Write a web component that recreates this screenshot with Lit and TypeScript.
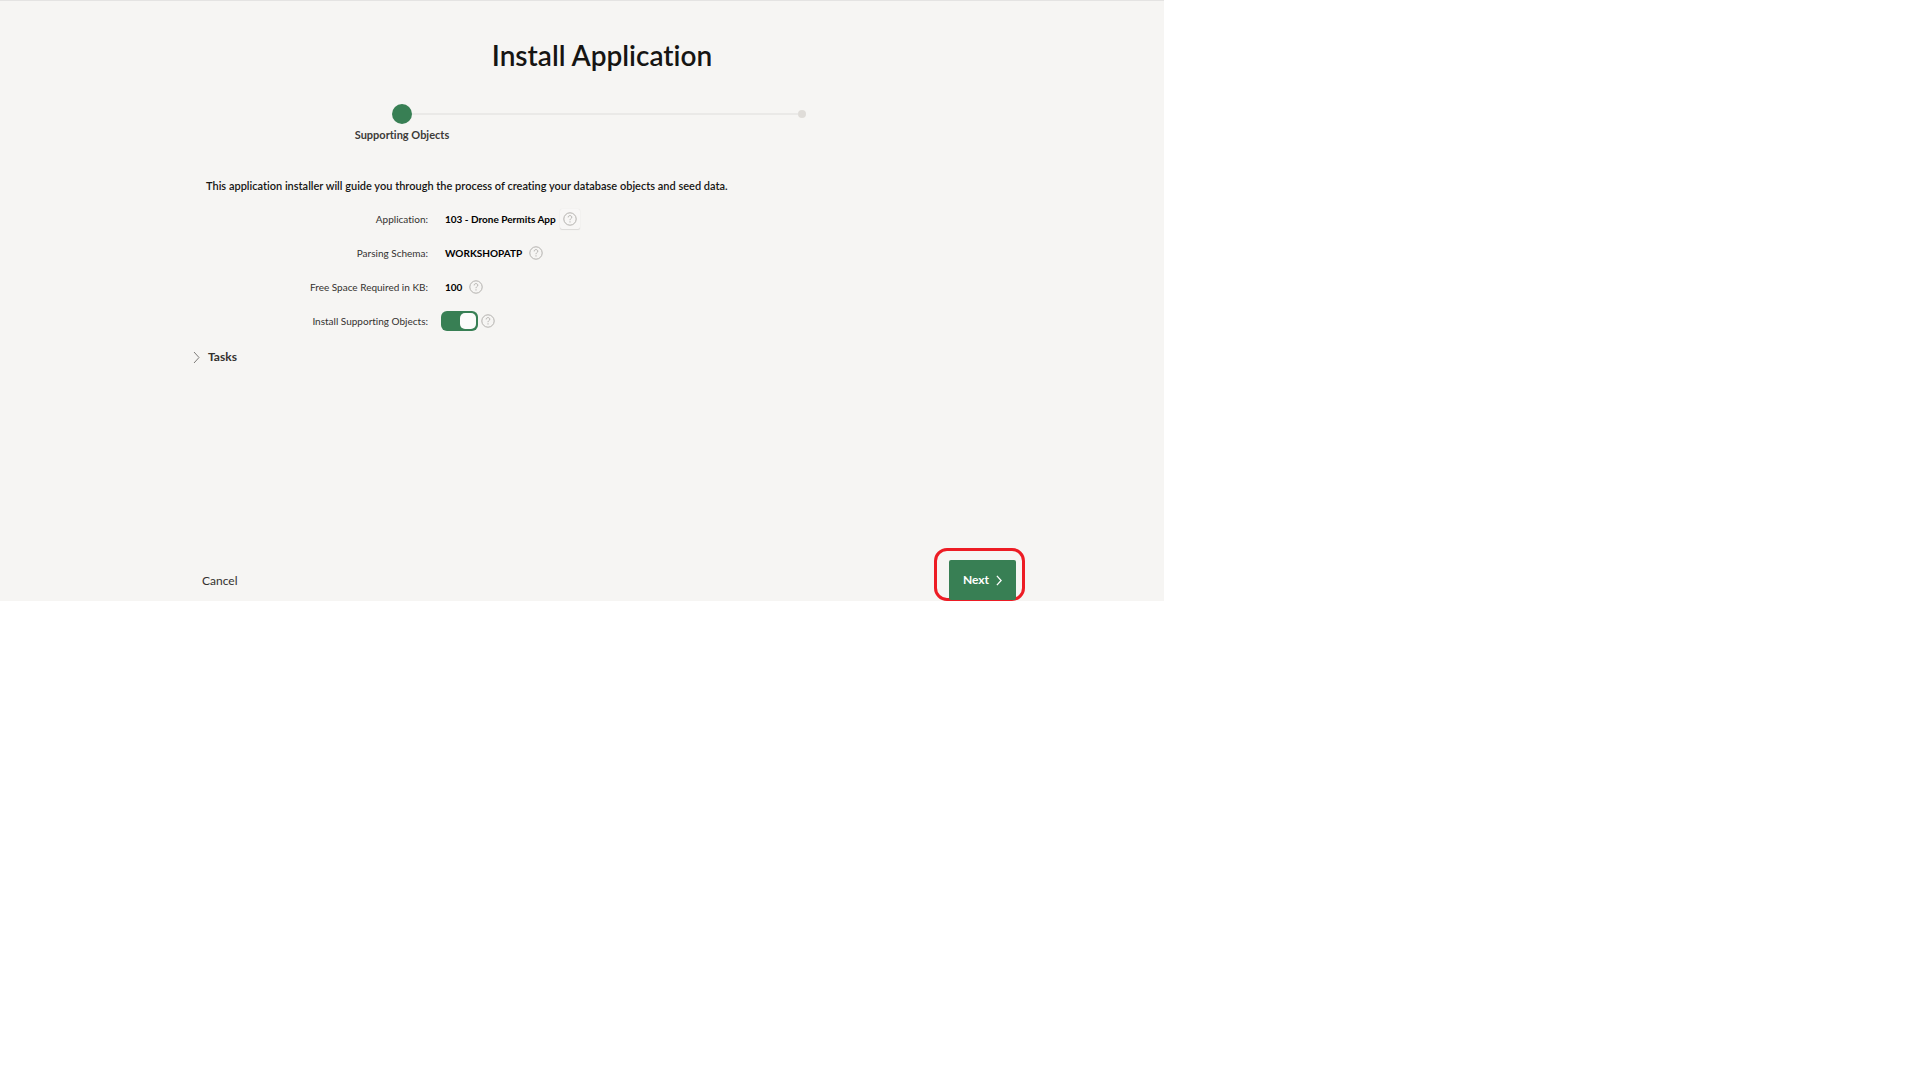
import { LitElement, html, css, svg, nothing } from "lit";
import { customElement, property, state } from "lit/decorators.js";
import { classMap } from "lit/directives/class-map.js";

interface Step {
  label: string;
}

interface Field {
  id: string;
  label: string;
  value: string;
  raised?: boolean;
}

const STEPS: Step[] = [{ label: "Supporting Objects" }, { label: "" }];

const FIELDS: Field[] = [
  { id: "application", label: "Application:", value: "103 - Drone Permits App", raised: true },
  { id: "schema", label: "Parsing Schema:", value: "WORKSHOPATP" },
  { id: "space", label: "Free Space Required in KB:", value: "100" },
];

const chevron = svg`<path d="M1 1l5 5.5L1 12" fill="none" stroke="currentColor" />`;

@customElement("help-button")
class HelpButton extends LitElement {
  @property() topic = "";
  @property({ type: Boolean }) raised = false;

  static styles = css`
    :host {
      display: block;
    }
    .help {
      display: flex;
      align-items: center;
      justify-content: center;
      width: 20px;
      height: 20px;
      padding: 0;
      border: 0;
      border-radius: 2px;
      background: transparent;
      color: #b3b1ae;
      cursor: pointer;
    }
    .raised {
      box-shadow: 0 1px 1px rgba(0, 0, 0, 0.1), 0 0 1px rgba(0, 0, 0, 0.1);
      background: #f8f7f6;
    }
    svg {
      display: block;
    }
  `;

  render() {
    return html`<button
      type="button"
      class=${classMap({ help: true, raised: this.raised })}
      aria-label="Help: ${this.topic}"
    >
      <svg width="14" height="14" viewBox="0 0 14 14" fill="none" stroke="currentColor" aria-hidden="true">
        <circle cx="7" cy="7" r="6.2" />
        <path d="M5.2 5.4c0-1.2.8-1.8 1.8-1.8s1.8.7 1.8 1.6c0 1.3-1.8 1.4-1.8 3" />
        <path d="M7 9.3v1.2" />
      </svg>
    </button>`;
  }
}

@customElement("app-root")
class AppRoot extends LitElement {
  @state() private tasksOpen = false;

  static styles = css`
    :host {
      display: block;
      min-height: 100vh;
      background: #fff;
      color: #161513;
      font-family: Lato, "Open Sans", sans-serif;
      font-size: 11px;
      line-height: 16px;
      font-variant-ligatures: none;
    }
    .panel {
      box-sizing: border-box;
      max-width: 1164px;
      display: flex;
      flex-direction: column;
      border-top: 1px solid #e4e3e2;
      padding: 0 139px 0 190px;
      background: #f6f5f3;
    }
    .wizard {
      padding: 0 23px 0 12px;
    }
    .title {
      margin: 0;
      padding-top: 36px;
      font-size: 28px;
      line-height: 36px;
      font-weight: 600;
      text-align: center;
    }
    .steps {
      display: flex;
      margin: 31px 0 0;
      padding: 0;
      list-style: none;
    }
    .step {
      flex: 1;
      display: grid;
      grid-template-columns: 1fr auto 1fr;
      grid-template-rows: 20px 22px;
      align-items: center;
      justify-items: center;
    }
    .rail {
      justify-self: stretch;
      height: 2px;
      background: #eae9e7;
    }
    .rail.off {
      background: transparent;
    }
    .dot {
      width: 8px;
      height: 8px;
      border-radius: 50%;
      background: #dfdcd8;
    }
    .current .dot {
      width: 20px;
      height: 20px;
      background: #387f54;
    }
    .step-label {
      grid-column: 1 / -1;
      font-weight: 700;
      color: #3d3b38;
    }
    .intro {
      margin: 32px 0 0;
      padding: 0 4px;
      font-weight: 600;
    }
    .form {
      margin-top: 8px;
    }
    .row {
      display: flex;
      align-items: center;
      height: 34px;
    }
    .label {
      flex: 0 0 226px;
      text-align: right;
      font-size: 10px;
      color: #33312f;
    }
    .control {
      display: flex;
      align-items: center;
      padding-left: 13px;
    }
    .value {
      padding: 0 4px;
      font-size: 10px;
      font-weight: 700;
      color: #000;
    }
    .toggle {
      appearance: none;
      box-sizing: border-box;
      display: flex;
      width: 37px;
      height: 20px;
      margin: 0;
      padding: 2px;
      border-radius: 6px;
      background: #8b8580;
      cursor: pointer;
    }
    .toggle::before {
      content: "";
      width: 16px;
      border-radius: 5px;
      background: #fcfbfa;
    }
    .toggle:checked {
      justify-content: flex-end;
      background: #387f54;
    }
    .tasks {
      display: flex;
      align-items: center;
      gap: 8px;
      margin-top: 11px;
      padding: 0 3px;
      border: 0;
      background: transparent;
      color: #33312f;
      font: inherit;
      font-size: 12px;
      font-weight: 700;
      cursor: pointer;
    }
    .tasks svg {
      color: #7c7a77;
    }
    .tasks.open svg {
      transform: rotate(90deg);
    }
    .footer {
      display: flex;
      align-items: flex-end;
      justify-content: space-between;
      margin-top: 183px;
    }
    .cancel {
      height: 40px;
      padding: 0 12px;
      border: 0;
      background: transparent;
      color: #33312f;
      font: inherit;
      font-size: 12px;
      cursor: pointer;
    }
    .highlight {
      box-sizing: border-box;
      display: flex;
      border: 3px solid #ed1c24;
      border-radius: 13px;
      padding: 9px 6px 0 12px;
      height: 53px;
    }
    .next {
      display: flex;
      align-items: center;
      gap: 7px;
      height: 40px;
      padding: 0 14px;
      border: 0;
      border-radius: 2px;
      background: #387f54;
      color: #fff;
      font: inherit;
      font-size: 12px;
      font-weight: 700;
      cursor: pointer;
    }
  `;

  private toggleTasks() {
    this.tasksOpen = !this.tasksOpen;
  }

  private renderStep(step: Step, index: number) {
    return html`<li class=${classMap({ step: true, current: index === 0 })}>
      <span class=${classMap({ rail: true, off: index === 0 })}></span>
      <span class="dot"></span>
      <span class=${classMap({ rail: true, off: index === STEPS.length - 1 })}></span>
      ${step.label ? html`<span class="step-label">${step.label}</span>` : nothing}
    </li>`;
  }

  private renderField(field: Field) {
    return html`<div class="row">
      <label class="label" for=${field.id}>${field.label}</label>
      <div class="control">
        <output class="value" id=${field.id}>${field.value}</output>
        <help-button topic=${field.label} ?raised=${field.raised ?? false}></help-button>
      </div>
    </div>`;
  }

  render() {
    return html`<main class="panel">
      <div class="wizard">
        <h1 class="title">Install Application</h1>
        <ol class="steps">
          ${STEPS.map((step, index) => this.renderStep(step, index))}
        </ol>
        <p class="intro">
          This application installer will guide you through the process of creating your database objects and seed data.
        </p>
        <form class="form">
          ${FIELDS.map((field) => this.renderField(field))}
          <div class="row">
            <label class="label" for="install">Install Supporting Objects:</label>
            <div class="control">
              <input class="toggle" id="install" type="checkbox" role="switch" checked />
              <help-button topic="Install Supporting Objects:"></help-button>
            </div>
          </div>
        </form>
      </div>
      <div>
        <button
          type="button"
          class=${classMap({ tasks: true, open: this.tasksOpen })}
          aria-expanded=${this.tasksOpen ? "true" : "false"}
          @click=${this.toggleTasks}
        >
          <svg width="7" height="13" viewBox="0 0 7 13" aria-hidden="true">${chevron}</svg>
          Tasks
        </button>
      </div>
      <footer class="footer">
        <button type="button" class="cancel">Cancel</button>
        <div class="highlight">
          <button type="button" class="next">
            Next
            <svg width="6" height="11" viewBox="0 0 7 13" stroke-width="1.5" aria-hidden="true">${chevron}</svg>
          </button>
        </div>
      </footer>
    </main>`;
  }
}
